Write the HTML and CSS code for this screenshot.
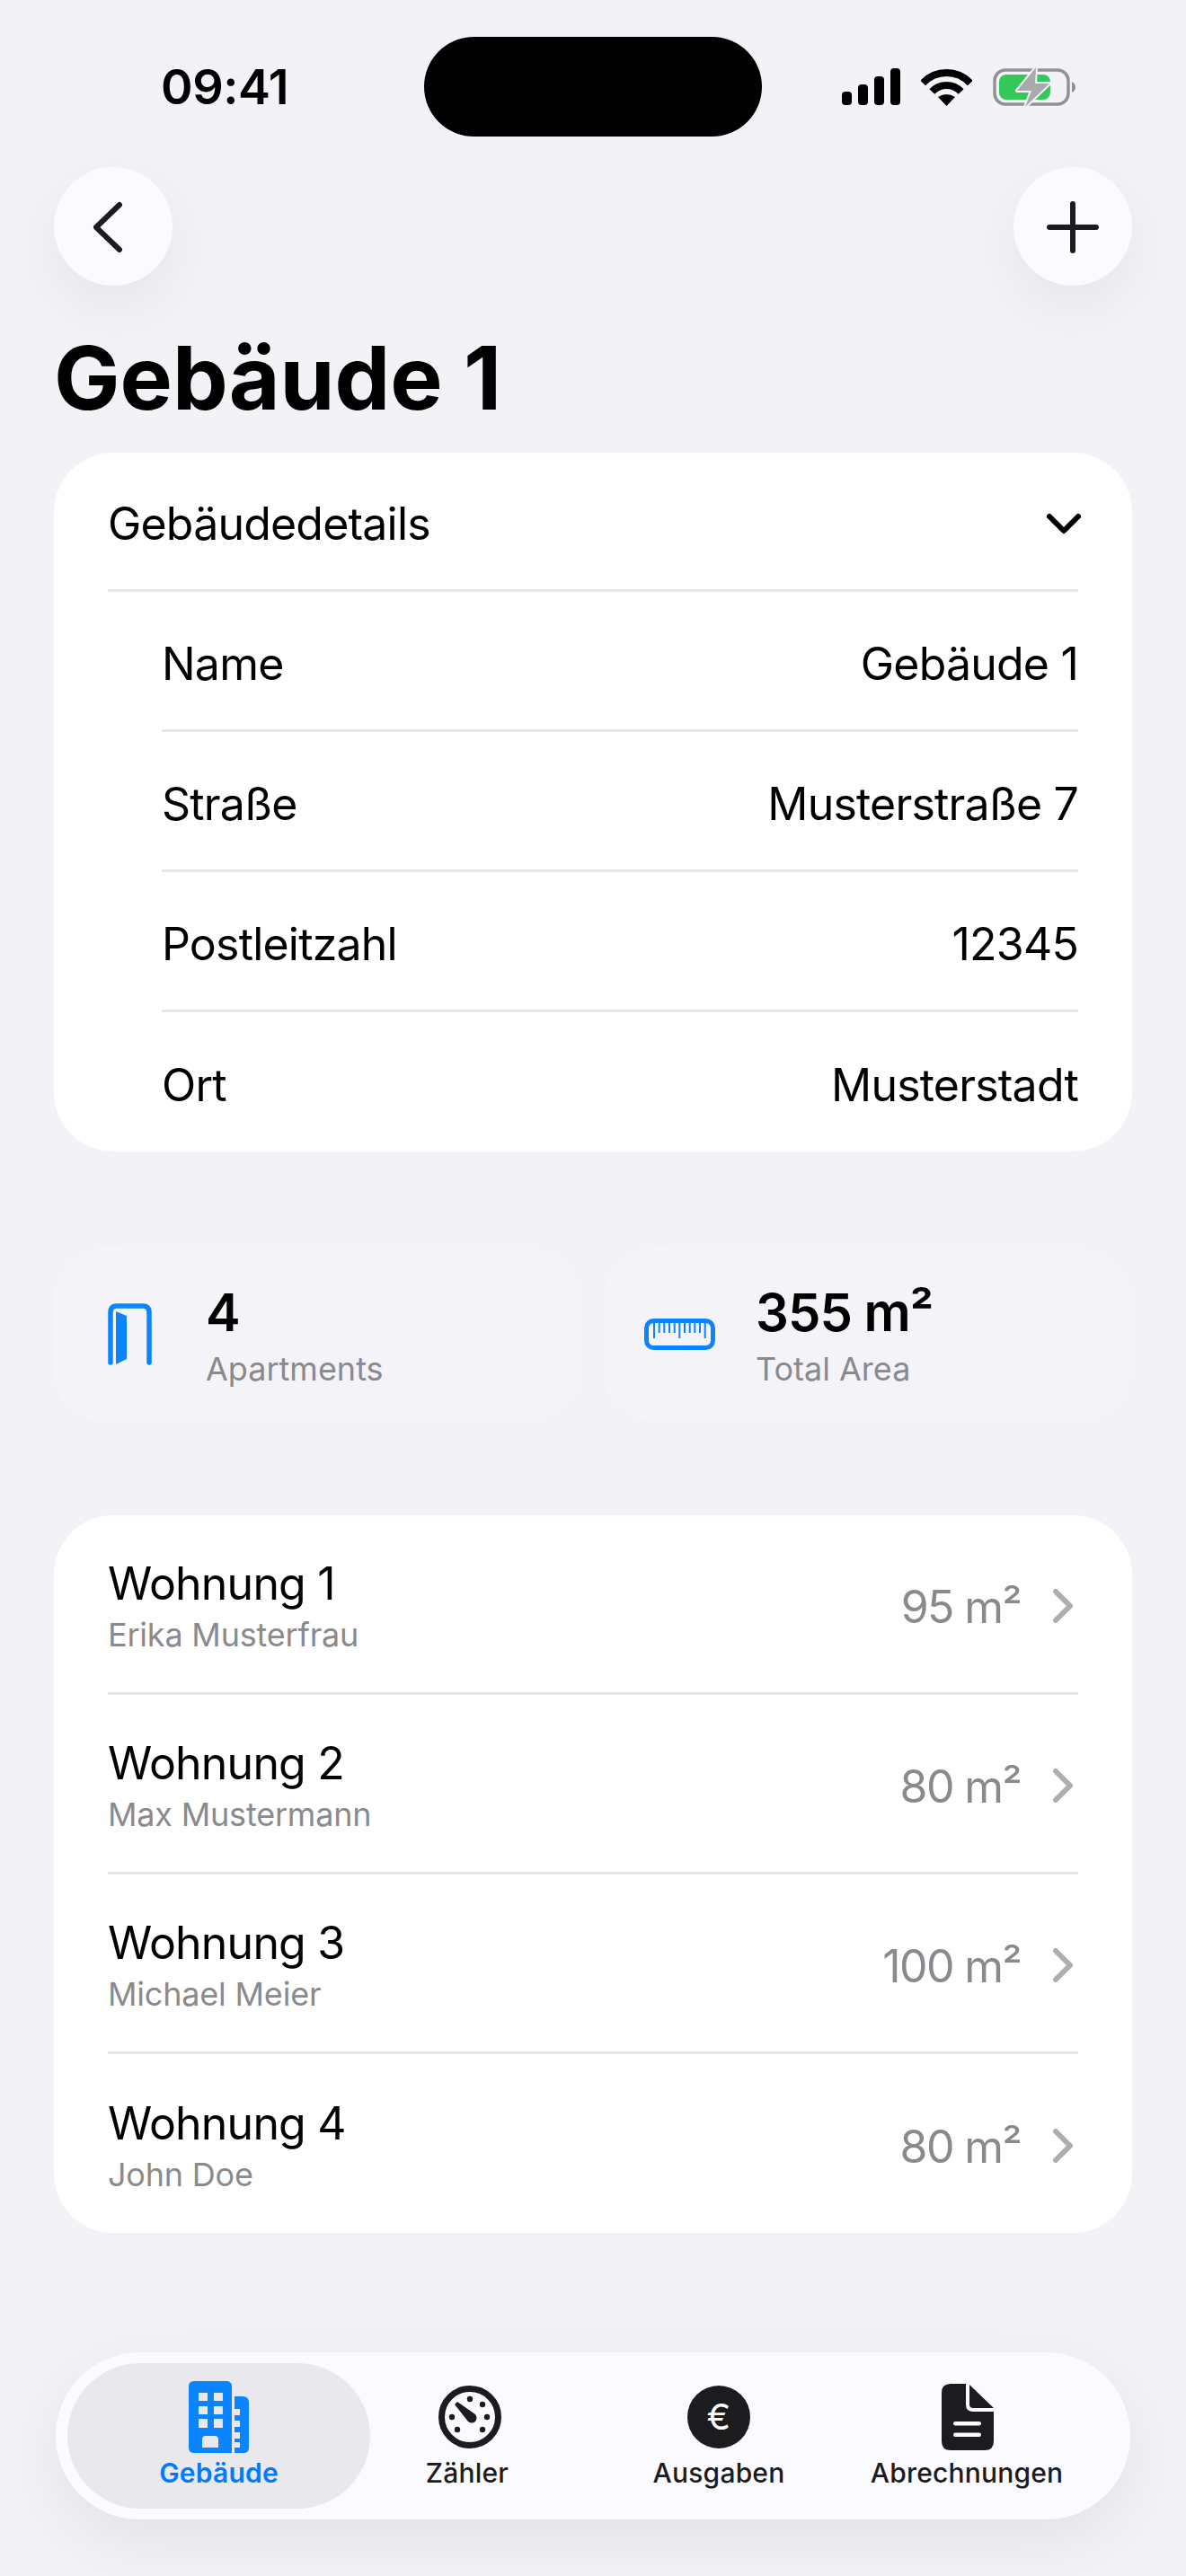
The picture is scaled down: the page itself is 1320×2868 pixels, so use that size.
FILE: index.html
```html
<!DOCTYPE html>
<html lang="de">

<head>
    <meta charset="UTF-8">
    <meta name="viewport" content="width=device-width, initial-scale=1.0">
    <title>Gebäude 1</title>
    <link rel="stylesheet" href="styles.css">
</head>

<body>
    <div class="status">
        <div class="time">09:41</div>
        <div class="island"></div>
        <div class="status-icons">
            <svg width="65" height="41" viewBox="0 0 65 41">
                <rect x="0" y="26" width="11" height="15" rx="4" />
                <rect x="18" y="18" width="11" height="23" rx="4" />
                <rect x="36" y="9" width="11" height="32" rx="4" />
                <rect x="54" y="0" width="11" height="41" rx="4" />
            </svg>
            <svg class="wifi" width="57" height="42" viewBox="0 0 57 42">
                <path d="M2.2 16.5A36 36 0 0 1 54.8 16.5" fill="none" stroke="#000" stroke-width="8" />
                <path d="M12.4 26A22 22 0 0 1 44.6 26" fill="none" stroke="#000" stroke-width="8" />
                <path d="M28.5 42L19 32Q28.5 26 38 32Z" />
            </svg>
            <svg class="battery" width="92" height="46" viewBox="0 -2 92 46">
                <rect x="2" y="2" width="82" height="38" rx="12" fill="none" stroke="#929296" stroke-width="3.5" />
                <rect x="7" y="7" width="57" height="28" rx="8" fill="#34c759" />
                <path d="M88 15Q92 17 92 21Q92 25 88 27Z" fill="#929296" />
                <path d="M48 -1L27 25H43L36 43L63 17H47Z" fill="#a9a9ae" stroke="#f2f2f7" stroke-width="4" stroke-linejoin="round" paint-order="stroke" />
            </svg>
        </div>
    </div>

    <div class="nav">
        <button class="round-btn">
            <svg width="132" height="132" viewBox="0 0 132 132">
                <path d="M73 42L47 67L73 92" class="line" />
            </svg>
        </button>
        <button class="round-btn">
            <svg width="132" height="132" viewBox="0 0 132 132">
                <path d="M66 41V93M40 67H92" class="line" />
            </svg>
        </button>
    </div>

    <h1 class="title">Gebäude 1</h1>

    <section class="card details">
        <div class="details-head">
            <span>Gebäudedetails</span>
            <svg width="38" height="24" viewBox="0 0 38 24">
                <path d="M3 4L19 20L35 4" class="line black" />
            </svg>
        </div>
        <div class="detail-row"><span>Name</span><span>Gebäude 1</span></div>
        <div class="detail-row"><span>Straße</span><span>Musterstraße 7</span></div>
        <div class="detail-row"><span>Postleitzahl</span><span>12345</span></div>
        <div class="detail-row"><span>Ort</span><span>Musterstadt</span></div>
    </section>

    <section class="stats">
        <div class="stat">
            <div class="stat-icon">
                <svg width="49" height="69" viewBox="0 0 49 69">
                    <path d="M3 66V10Q3 3 10 3H39Q46 3 46 10V66" fill="none" stroke="#0a84ff" stroke-width="5.5" stroke-linecap="round" />
                    <path d="M9 9L21 14V62L9 68Z" fill="#0a84ff" />
                </svg>
            </div>
            <div class="stat-text">
                <div class="stat-value">4</div>
                <div class="stat-label">Apartments</div>
            </div>
        </div>
        <div class="stat">
            <div class="stat-icon">
                <svg width="79" height="35" viewBox="0 0 79 35">
                    <rect x="2.5" y="2.5" width="74" height="30" rx="8" fill="none" stroke="#0a84ff" stroke-width="5" />
                    <path d="M11 4V22M16.7 4V16M22.3 4V16M28 4V16M33.7 4V16M39.3 4V22M45 4V16M50.7 4V16M56.3 4V16M62 4V16M67.7 4V22" stroke="#0a84ff" stroke-width="2" />
                </svg>
            </div>
            <div class="stat-text">
                <div class="stat-value">355 m²</div>
                <div class="stat-label">Total Area</div>
            </div>
        </div>
    </section>

    <section class="card flats">
        <div class="flat">
            <div class="flat-text">
                <div class="flat-name">Wohnung 1</div>
                <div class="flat-person">Erika Musterfrau</div>
            </div>
            <div class="flat-area">95 m²</div>
            <svg class="flat-arrow" width="22" height="38" viewBox="0 0 22 38"><path d="M3 3L19 19L3 35" /></svg>
        </div>
        <div class="flat">
            <div class="flat-text">
                <div class="flat-name">Wohnung 2</div>
                <div class="flat-person">Max Mustermann</div>
            </div>
            <div class="flat-area">80 m²</div>
            <svg class="flat-arrow" width="22" height="38" viewBox="0 0 22 38"><path d="M3 3L19 19L3 35" /></svg>
        </div>
        <div class="flat">
            <div class="flat-text">
                <div class="flat-name">Wohnung 3</div>
                <div class="flat-person">Michael Meier</div>
            </div>
            <div class="flat-area">100 m²</div>
            <svg class="flat-arrow" width="22" height="38" viewBox="0 0 22 38"><path d="M3 3L19 19L3 35" /></svg>
        </div>
        <div class="flat">
            <div class="flat-text">
                <div class="flat-name">Wohnung 4</div>
                <div class="flat-person">John Doe</div>
            </div>
            <div class="flat-area">80 m²</div>
            <svg class="flat-arrow" width="22" height="38" viewBox="0 0 22 38"><path d="M3 3L19 19L3 35" /></svg>
        </div>
    </section>

    <nav class="tabbar">
        <div class="tab active">
            <div class="tab-icon">
                <svg width="67" height="80" viewBox="0 0 67 80">
                    <path fill="#0a84ff" fill-rule="evenodd" d="M6 0H42Q48 0 48 6V80H6Q0 80 0 74V6Q0 0 6 0ZM11 13V22H21V13ZM28 13V22H38V13ZM11 28V37H21V28ZM28 28V37H38V28ZM11 42V52H21V42ZM28 42V52H38V42ZM19 61Q15 61 15 65V74H33V65Q33 61 29 61Z" />
                    <path fill="#0a84ff" d="M51 17H60Q67 17 67 24V74Q67 80 61 80H51V74H57V68H51V64H57V57H51V51H57V44H51V38H57V31H51Z" />
                </svg>
            </div>
            <span>Gebäude</span>
        </div>
        <div class="tab">
            <div class="tab-icon gauge">
                <svg width="70" height="70" viewBox="0 0 70 70">
                    <circle cx="35" cy="35" r="31.5" fill="none" stroke="#1c1c1e" stroke-width="7" />
                    <path d="M18 21L21 18L41 32Q44 36 41 40Q37 43 33 40Z" fill="#1c1c1e" />
                    <circle cx="35" cy="15" r="3.2" fill="#1c1c1e" />
                    <circle cx="49" cy="21" r="3.2" fill="#1c1c1e" />
                    <circle cx="54" cy="35" r="3.2" fill="#1c1c1e" />
                    <circle cx="49" cy="49" r="3.2" fill="#1c1c1e" />
                    <circle cx="21" cy="49" r="3.2" fill="#1c1c1e" />
                    <circle cx="15" cy="35" r="3.2" fill="#1c1c1e" />
                </svg>
            </div>
            <span>Zähler</span>
        </div>
        <div class="tab">
            <div class="tab-icon">
                <div class="euro">€</div>
            </div>
            <span>Ausgaben</span>
        </div>
        <div class="tab">
            <div class="tab-icon doc">
                <svg width="58" height="74" viewBox="0 0 58 74">
                    <path fill="#1c1c1e" d="M10 0H27V23Q27 31 35 31H58V64Q58 74 48 74H10Q0 74 0 64V10Q0 0 10 0Z" />
                    <path fill="#1c1c1e" d="M31 1L58 27H35Q31 27 31 23Z" />
                    <rect x="13" y="42" width="31" height="4.5" rx="2.2" fill="#fbfbff" />
                    <rect x="13" y="54.5" width="31" height="4.5" rx="2.2" fill="#fbfbff" />
                </svg>
            </div>
            <span>Abrechnungen</span>
        </div>
    </nav>
</body>

</html>
```

FILE: styles.css
```css
* {
    margin: 0;
    padding: 0;
    box-sizing: border-box;
}

body {
    width: 1320px;
    height: 2868px;
    overflow: hidden;
    background: #f2f2f7;
    font-family: Inter, "Liberation Sans", sans-serif;
    color: #000;
}

.line {
    fill: none;
    stroke: #1c1c1e;
    stroke-width: 6;
    stroke-linecap: round;
    stroke-linejoin: round;
}

.line.black {
    stroke: #000;
}

/* status bar */
.status {
    display: grid;
    grid-template-columns: 472px 376px 1fr;
    height: 111px;
    margin-top: 41px;
}

.time {
    text-align: center;
    font-size: 54px;
    font-weight: 600;
    line-height: 111px;
    padding-left: 28px;
    letter-spacing: -0.5px;
}

.island {
    background: #000;
    border-radius: 56px;
}

.status-icons {
    display: flex;
    align-items: center;
    padding-left: 89px;
}

.wifi {
    margin-left: 23px;
}

.battery {
    margin-left: 23px;
}

/* top buttons */
.nav {
    display: flex;
    justify-content: space-between;
    padding: 0 60px;
    margin-top: 34px;
}

.round-btn {
    width: 132px;
    height: 132px;
    border: 0;
    border-radius: 50%;
    background: #fbfbff;
    box-shadow: 0 24px 70px rgba(0, 0, 0, 0.06);
}

.round-btn svg {
    display: block;
}

.title {
    font-size: 98px;
    font-weight: 700;
    line-height: 120px;
    margin: 43px 0 23px 60px;
}

/* cards */
.card {
    margin: 0 60px;
    background: #fff;
    border-radius: 66px;
    overflow: hidden;
}

.details {
    height: 778px;
    padding: 0 60px;
    font-size: 50px;
    letter-spacing: -0.8px;
}

.details-head {
    display: flex;
    align-items: center;
    justify-content: space-between;
    height: 155px;
    padding-top: 6px;
    border-bottom: 3px solid #e5e5ea;
}

.details-head svg {
    margin-right: -3px;
}

.detail-row {
    display: flex;
    justify-content: space-between;
    align-items: center;
    height: 156px;
    padding-top: 6px;
    margin-left: 60px;
    border-bottom: 3px solid #e5e5ea;
}

.detail-row:last-child {
    border-bottom: 0;
}

.stats {
    display: grid;
    grid-template-columns: 1fr 1fr;
    gap: 24px;
    margin: 107px 60px 105px;
}

.stat {
    display: flex;
    align-items: center;
    height: 193px;
    padding-left: 34px;
    background: linear-gradient(90deg, #f5f5f8, #f3f3f8);
    border-radius: 56px;
}

.stat-icon {
    display: flex;
    justify-content: center;
    flex: none;
    width: 100px;
    margin-right: 35px;
}

.stat-text {
    padding-top: 3px;
}

.stat-value {
    font-size: 58px;
    font-weight: 600;
    line-height: 70px;
    letter-spacing: -1px;
}

.stat-label {
    margin-top: 3px;
    font-size: 36px;
    line-height: 50px;
    color: #8a8a8e;
}

.flats {
    height: 799px;
    padding: 0 60px;
}

.flat {
    display: flex;
    align-items: center;
    height: 200px;
    border-bottom: 3px solid #e5e5ea;
}

.flat:last-child {
    border-bottom: 0;
}

.flat-text {
    flex: 1;
    padding-top: 3px;
}

.flat-name {
    font-size: 50px;
    line-height: 62px;
    letter-spacing: -0.8px;
}

.flat-person {
    margin-top: 3px;
    font-size: 36px;
    line-height: 46px;
    letter-spacing: -0.2px;
    color: #8a8a8e;
}

.flat-area {
    padding-top: 6px;
    font-size: 50px;
    letter-spacing: -1.6px;
    color: #8a8a8e;
}

.flat-arrow {
    flex: none;
    margin: 4px 6px 0 36px;
}

.flat-arrow path {
    fill: none;
    stroke: #aeaeb2;
    stroke-width: 6;
    stroke-linecap: round;
    stroke-linejoin: round;
}

/* bottom tabs */
.tabbar {
    display: grid;
    grid-template-columns: 337px 216px 344px 208px;
    width: 1196px;
    height: 186px;
    margin: 133px 0 0 62px;
    padding: 12px 13px;
    background: #fbfbff;
    border-radius: 93px;
    box-shadow: 0 24px 80px rgba(0, 0, 0, 0.07);
}

.tab {
    display: flex;
    flex-direction: column;
    align-items: center;
    height: 162px;
    border-radius: 81px;
    font-size: 30px;
    font-weight: 500;
    letter-spacing: 0.2px;
    color: #1c1c1e;
    white-space: nowrap;
}

.tab.active {
    background: #e8e8ed;
    color: #007aff;
    font-weight: 600;
}

.tab-icon {
    display: flex;
    align-items: center;
    justify-content: center;
    height: 100px;
    padding-top: 20px;
    margin-bottom: 4px;
}

.tab-icon.gauge {
    margin-left: 6px;
}

.tab-icon.doc {
    margin-left: 2px;
}

.euro {
    width: 70px;
    height: 70px;
    border-radius: 50%;
    background: #1c1c1e;
    color: #fff;
    font-size: 40px;
    font-weight: 400;
    line-height: 70px;
    text-align: center;
}
```
